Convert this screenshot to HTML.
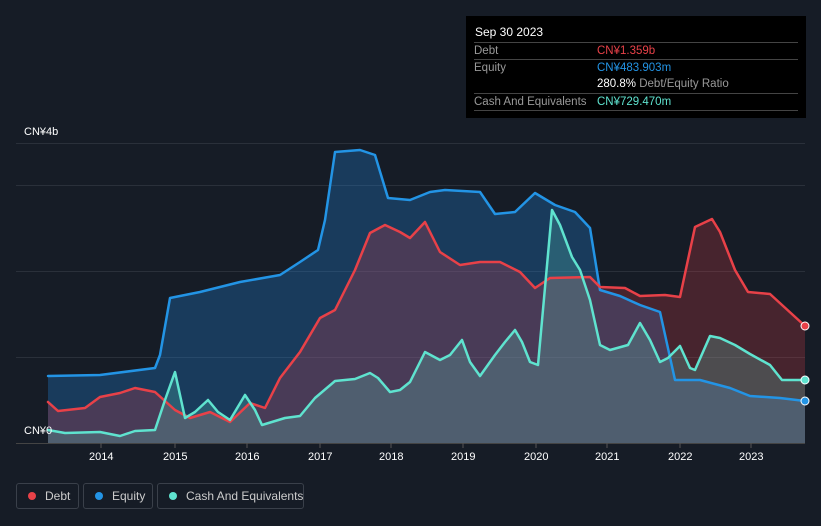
<!DOCTYPE html>
<html><head><meta charset="utf-8"><style>
html,body{margin:0;width:821px;height:526px;overflow:hidden}
body{background:#161c26;font-family:"Liberation Sans",sans-serif;position:relative}
.tt{position:absolute;left:466px;top:16px;width:340px;height:102px;background:#000;color:#fff;font-size:11.5px}
.tt .r{position:absolute;left:8px;right:8px;border-top:1px solid #444;height:17px}
.lab{color:#999;position:absolute;left:0;top:2px}
.val{position:absolute;left:123px;top:2px}
.lg{position:absolute;top:483px;height:26px;border:1px solid #3a404a;border-radius:3px;color:#ccc;font-size:12px;line-height:24px;box-sizing:border-box;white-space:nowrap}
.dot{display:inline-block;width:8px;height:8px;border-radius:50%;margin:0 9px 0 11px}
.ax{position:absolute;color:#fff;font-size:11px}
</style></head><body>
<svg width="821" height="526" style="position:absolute;left:0;top:0">
<g stroke="#2a303a" stroke-width="1">
<line x1="16" y1="143.5" x2="805" y2="143.5"/><line x1="16" y1="185.5" x2="805" y2="185.5"/>
<line x1="16" y1="271.5" x2="805" y2="271.5"/><line x1="16" y1="357.5" x2="805" y2="357.5"/>
<line x1="16" y1="443.5" x2="805" y2="443.5" stroke="#444"/>
</g>
<g stroke="#555"><line x1="101" y1="443" x2="101" y2="448"/><line x1="175" y1="443" x2="175" y2="448"/><line x1="247" y1="443" x2="247" y2="448"/><line x1="320" y1="443" x2="320" y2="448"/><line x1="391" y1="443" x2="391" y2="448"/><line x1="463" y1="443" x2="463" y2="448"/><line x1="536" y1="443" x2="536" y2="448"/><line x1="607" y1="443" x2="607" y2="448"/><line x1="680" y1="443" x2="680" y2="448"/><line x1="751" y1="443" x2="751" y2="448"/></g>
<defs>
<path id="eq" d="M48,376 L100,375 155,368 160,355 170,298 200,292 240,282 280,275 300,262 318,250 325,220 335,152 360,150 375,155 388,198 410,200 430,192 445,190 480,192 495,214 515,212 535,193 555,205 575,212 590,228 600,290 620,296 640,305 660,312 675,380 700,380 730,388 750,396 780,398 805,401"/>
<path id="de" d="M48,402 L58,411 85,408 100,397 120,393 135,388 155,392 175,410 190,418 210,412 230,422 250,403 265,408 280,378 300,352 320,318 335,310 355,270 370,233 385,225 400,232 410,238 425,222 440,252 460,265 480,262 500,262 520,272 535,288 550,278 590,277 600,287 625,288 640,296 665,295 680,297 695,227 712,219 720,232 735,270 748,292 770,294 805,326"/>
<path id="ca" d="M48,430 L65,433 100,432 120,436 135,431 155,430 165,400 175,372 185,418 195,412 208,400 218,412 230,420 245,395 255,410 262,425 285,418 300,416 315,398 335,381 355,379 370,373 378,378 390,392 400,390 410,382 425,352 440,360 450,355 462,340 470,362 480,376 495,355 505,342 515,330 522,342 530,362 538,365 552,210 560,225 572,257 580,270 590,300 600,345 610,350 628,345 640,323 650,340 660,362 668,358 680,346 690,368 695,370 710,336 720,338 735,345 750,354 770,365 782,380 805,380"/>
</defs>
<g stroke="none">
<path fill="rgba(33,132,220,0.3)" d="M48,376 L100,375 155,368 160,355 170,298 200,292 240,282 280,275 300,262 318,250 325,220 335,152 360,150 375,155 388,198 410,200 430,192 445,190 480,192 495,214 515,212 535,193 555,205 575,212 590,228 600,290 620,296 640,305 660,312 675,380 700,380 730,388 750,396 780,398 805,401 L805,443 48,443Z"/>
<path fill="rgba(220,60,70,0.25)" d="M48,402 L58,411 85,408 100,397 120,393 135,388 155,392 175,410 190,418 210,412 230,422 250,403 265,408 280,378 300,352 320,318 335,310 355,270 370,233 385,225 400,232 410,238 425,222 440,252 460,265 480,262 500,262 520,272 535,288 550,278 590,277 600,287 625,288 640,296 665,295 680,297 695,227 712,219 720,232 735,270 748,292 770,294 805,326 L805,443 48,443Z"/>
<path fill="rgba(100,220,200,0.22)" d="M48,430 L65,433 100,432 120,436 135,431 155,430 165,400 175,372 185,418 195,412 208,400 218,412 230,420 245,395 255,410 262,425 285,418 300,416 315,398 335,381 355,379 370,373 378,378 390,392 400,390 410,382 425,352 440,360 450,355 462,340 470,362 480,376 495,355 505,342 515,330 522,342 530,362 538,365 552,210 560,225 572,257 580,270 590,300 600,345 610,350 628,345 640,323 650,340 660,362 668,358 680,346 690,368 695,370 710,336 720,338 735,345 750,354 770,365 782,380 805,380 L805,443 48,443Z"/>
</g>
<g fill="none" stroke-linejoin="round" stroke-linecap="round" stroke-width="2.5">
<use href="#eq" stroke="#2394e5"/><use href="#de" stroke="#e84148"/><use href="#ca" stroke="#5fe3cf"/>
</g>
<circle cx="805" cy="326" r="4" fill="#e84148" stroke="#fff" stroke-width="1"/>
<circle cx="805" cy="401" r="4" fill="#2394e5" stroke="#fff" stroke-width="1"/>
<circle cx="805" cy="380" r="4" fill="#5fe3cf" stroke="#fff" stroke-width="1"/>
</svg>
<div class="ax" style="left:24px;top:126px">CN¥4b</div>
<div class="ax" style="left:24px;top:425px">CN¥0</div>
<div class="ax" style="left:89px;top:451px">2014</div><div class="ax" style="left:163px;top:451px">2015</div><div class="ax" style="left:235px;top:451px">2016</div><div class="ax" style="left:308px;top:451px">2017</div><div class="ax" style="left:379px;top:451px">2018</div><div class="ax" style="left:451px;top:451px">2019</div><div class="ax" style="left:524px;top:451px">2020</div><div class="ax" style="left:595px;top:451px">2021</div><div class="ax" style="left:668px;top:451px">2022</div><div class="ax" style="left:739px;top:451px">2023</div>
<div class="tt">
<div style="position:absolute;left:9px;top:9px;font-size:12px">Sep 30 2023</div>
<div class="r" style="top:26px"><span class="lab">Debt</span><span class="val" style="color:#e84148">CN¥1.359b</span></div>
<div class="r" style="top:43px"><span class="lab">Equity</span><span class="val" style="color:#2394e5">CN¥483.903m</span></div>
<div class="r" style="top:60px;border-top:none"><span class="val"><span style="color:#fff">280.8%</span> <span style="color:#999">Debt/Equity Ratio</span></span></div>
<div class="r" style="top:77px"><span class="lab">Cash And Equivalents</span><span class="val" style="color:#5fe3cf">CN¥729.470m</span></div>
<div class="r" style="top:94px;height:0"></div>
</div>
<div class="lg" style="left:16px;width:63px"><span class="dot" style="background:#e84148"></span>Debt</div>
<div class="lg" style="left:83px;width:70px"><span class="dot" style="background:#2394e5"></span>Equity</div>
<div class="lg" style="left:157px;width:147px"><span class="dot" style="background:#5fe3cf"></span>Cash And Equivalents</div>
</body></html>
